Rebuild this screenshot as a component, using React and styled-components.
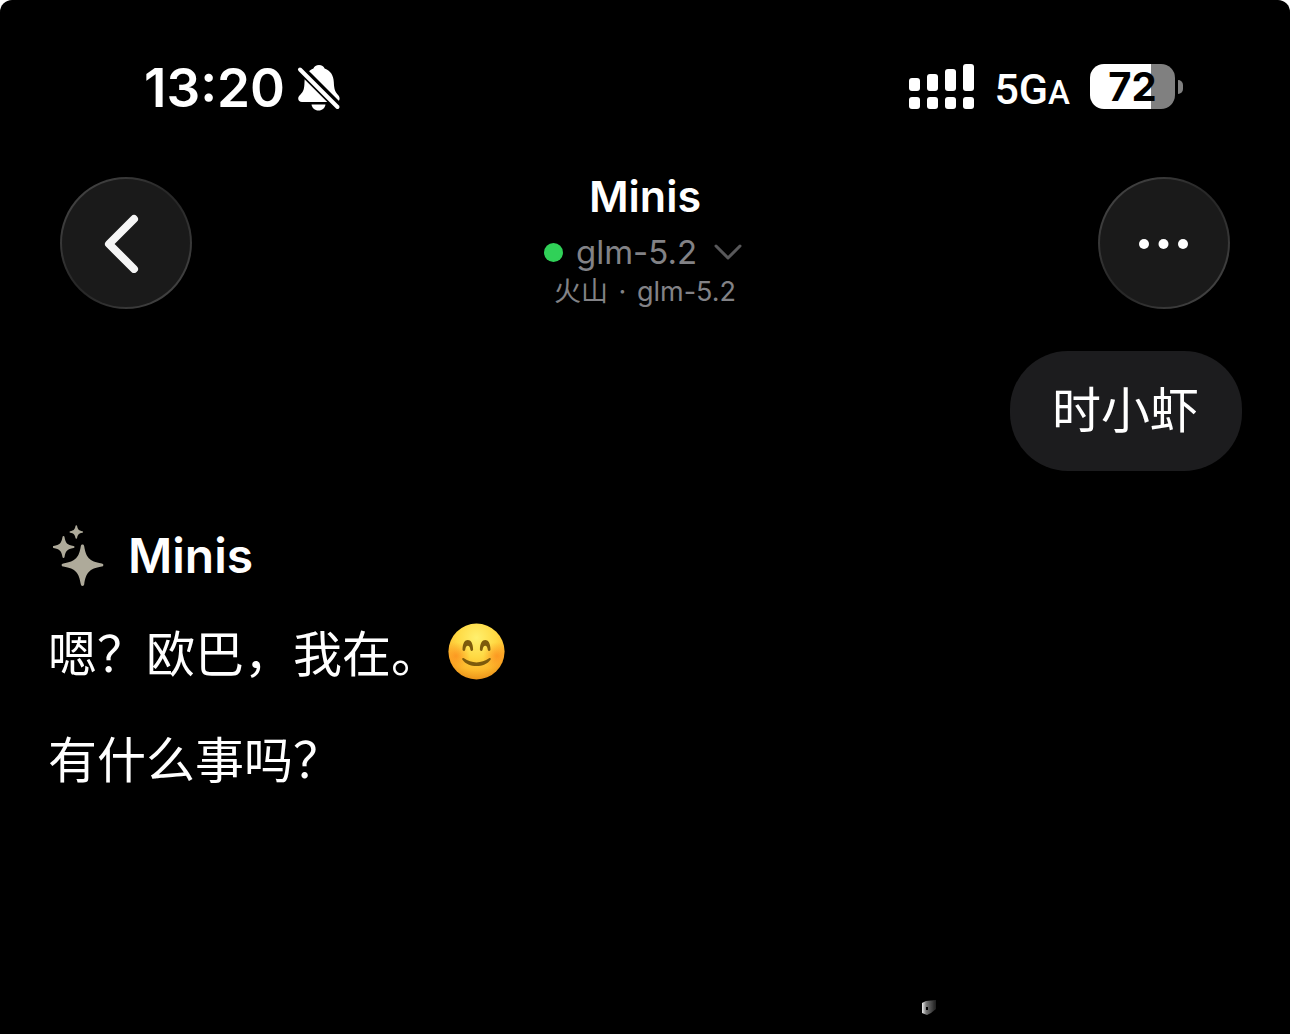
import React from "react";
import styled, { createGlobalStyle } from "styled-components";

const GlobalStyle = createGlobalStyle`
  * {
    box-sizing: border-box;
  }
  body {
    margin: 0;
    background: #fff;
    color: #fff;
    font-family: Inter, "Noto Sans CJK SC", sans-serif;
  }
  button {
    font: inherit;
    color: inherit;
    padding: 0;
    border: 0;
    background: none;
    cursor: pointer;
  }
  svg {
    display: block;
    flex: none;
  }
`;

const Screen = styled.div`
  min-height: 100vh;
  display: flex;
  flex-direction: column;
  background: #000;
  border-radius: 12px 12px 0 0;
`;

const StatusBar = styled.div`
  display: flex;
  justify-content: space-between;
  align-items: flex-start;
  padding: 58px 107px 0 144px;
`;

const Clock = styled.div`
  display: flex;
  align-items: center;
  gap: 12px;
  font-size: 53px;
  font-weight: 600;
  line-height: 60px;
`;

const StatusIcons = styled.div`
  display: flex;
  align-items: flex-end;
  margin-top: 6px;
`;

const Network = styled.span`
  margin: 0 20px;
  font-family: Roboto, sans-serif;
  font-size: 43px;
  font-weight: 500;
  line-height: 40px;

  small {
    font-size: 33px;
    line-height: 1;
  }
`;

const Battery = styled.div`
  width: 85px;
  height: 45px;
  border-radius: 14px;
  color: #000;
  font-size: 40px;
  font-weight: 700;
  line-height: 45px;
  text-align: center;
`;

const BatteryTip = styled.div`
  align-self: center;
  width: 5px;
  height: 14px;
  margin-left: 3px;
  border-radius: 0 7px 7px 0;
  background: #808080;
`;

const Header = styled.header`
  display: flex;
  justify-content: space-between;
  align-items: flex-start;
  padding: 0 60px;
  margin-top: 59px;
`;

const RoundButton = styled.button`
  width: 132px;
  height: 132px;
  display: flex;
  justify-content: center;
  align-items: center;
  border: 2px solid transparent;
  border-radius: 50%;
  background: linear-gradient(#1a1a1a, #1a1a1a) padding-box,
    linear-gradient(135deg, #4c4c4c, #282828 45%, #282828 55%, #4c4c4c)
      border-box;
`;

const TitleBox = styled.div`
  display: flex;
  flex-direction: column;
  align-items: center;
  color: #828286;
`;

const Title = styled.h1`
  margin: 0 0 17px;
  color: #fff;
  font-size: 43px;
  font-weight: 600;
  line-height: 38px;
`;

const ModelButton = styled.button`
  display: flex;
  align-items: center;
  font-size: 33px;
  line-height: 40px;

  span {
    margin: 0 17px 0 13px;
  }
`;

const OnlineDot = styled.i`
  width: 19px;
  height: 19px;
  border-radius: 50%;
  background: #30d158;
`;

const Provider = styled.div`
  font-size: 27px;
  line-height: 40px;

  span {
    margin: 0 3px;
  }
`;

const Chat = styled.main`
  display: flex;
  flex-direction: column;
  align-items: flex-start;
  padding: 39px 48px 0;
  font-size: 49px;
  line-height: 60px;
`;

const Bubble = styled.div`
  align-self: flex-end;
  padding: 30px 43px 30px 42px;
  border-radius: 58px;
  background: #1c1c1e;
`;

const Sender = styled.div`
  display: flex;
  align-items: center;
  gap: 23px;
  margin: 54px 0 34px 5px;

  h2 {
    margin: 0;
    font-size: 48px;
    font-weight: 600;
  }
`;

const Message = styled.p`
  display: flex;
  align-items: center;
  margin: 0 0 46px;
  font-family: "Noto Sans CJK SC", sans-serif;

  svg {
    margin-left: 8px;
  }
`;

const Footer = styled.footer`
  margin-top: auto;
  padding: 0 352px 18px 0;
  display: flex;
  justify-content: flex-end;
`;

const BATTERY = 72;
const LEVELS = [13, 17, 22, 27];

function BellOff() {
  return (
    <svg width="44" height="48" viewBox="0 0 44 48" fill="#fff">
      <path d="M22 1c2.800 0 4.800 1.500 5.600 3.500C34 6.800 36.500 12 36.800 18c.3 7 1.200 9.600 3.800 12.400 1.400 1.500 2 2.600 2 4.200 0 2-1.500 3.400-3.700 3.400H5C2.700 38 1.200 36.700 1.200 34.600c0-1.700.8-2.700 2.300-4.200C6.500 27.400 7.300 25 7.500 18 7.800 12 10.500 6.800 16.400 4.500 17.200 2.500 19.200 1 22 1z" />
      <path d="M14.500 40.500h14c-.5 3.400-3.200 6-7 6s-6.500-2.600-7-6z" />
      <path d="M-2-.6 48 49.400" stroke="#000" strokeWidth="9" />
      <path d="M3 5.500 40.500 43" stroke="#fff" strokeWidth="4" strokeLinecap="round" />
    </svg>
  );
}

function Signal() {
  return (
    <svg width="65" height="45" fill="#fff">
      {LEVELS.map((h, i) => (
        <g key={h}>
          <rect x={i * 18} y={27 - h} width="11" height={h} rx="3" />
          <rect x={i * 18} y="33" width="11" height="12" rx="3" />
        </g>
      ))}
    </svg>
  );
}

function Sparkles() {
  return (
    <svg width="52" height="62" viewBox="0 0 52 62" fill="#aeaa9a">
      <path d="M29.500 19.500c1 0 1.500.7 1.700 1.700 1.800 11 4.800 15 17.500 17.200 1 .2 1.700.7 1.700 1.600s-.7 1.400-1.700 1.600C36 43.800 33 48 31.200 59.300c-.2 1-.7 1.700-1.700 1.700s-1.500-.7-1.700-1.700C26 48 23 43.800 10.300 41.600c-1-.2-1.700-.7-1.700-1.600s.7-1.400 1.700-1.600C23 36.200 26 32.200 27.800 21.200c.2-1 .7-1.700 1.700-1.700z" />
      <path d="M10.500 11c.6 0 .9.400 1 1 1 6 2.700 8 9 9 .6.100 1 .4 1 1s-.4.900-1 1c-6.300 1-8 3-9 9-.1.600-.4 1-1 1s-.9-.4-1-1c-1-6-2.700-8-9-9-.6-.1-1-.4-1-1s.4-.9 1-1c6.300-1 8-3 9-9 .1-.6.4-1 1-1z" />
      <path d="M23.300.3c.5 0 .7.300.8.8.7 3.700 1.800 4.500 5.200 5.200.5.100.8.300.8.700s-.3.700-.8.800c-3.400.6-4.500 1.600-5.200 5.200-.1.500-.3.800-.8.800s-.7-.3-.8-.8c-.7-3.600-1.800-4.600-5.200-5.200-.5-.1-.8-.3-.8-.8s.3-.6.8-.7c3.400-.7 4.500-1.500 5.200-5.200.1-.5.300-.8.8-.8z" />
    </svg>
  );
}

function Smile() {
  return (
    <svg width="57" height="57" viewBox="0 0 57 57" role="img" aria-label="😊">
      <defs>
        <radialGradient id="face" cx="50%" cy="26%" r="76%">
          <stop offset="0" stopColor="#fff06e" />
          <stop offset=".45" stopColor="#ffd943" />
          <stop offset=".75" stopColor="#fdb92c" />
          <stop offset="1" stopColor="#e88d17" />
        </radialGradient>
        <radialGradient id="cheek">
          <stop offset="0" stopColor="#fb8a1c" stopOpacity=".75" />
          <stop offset="1" stopColor="#fb8a1c" stopOpacity="0" />
        </radialGradient>
        <clipPath id="head">
          <circle cx="28.500" cy="28.500" r="28" />
        </clipPath>
      </defs>
      <g clipPath="url(#head)">
        <path d="M0 0h57v57H0z" fill="url(#face)" />
        <circle cx="8" cy="33" r="14" fill="url(#cheek)" />
        <circle cx="49" cy="33" r="14" fill="url(#cheek)" />
      </g>
      <g fill="#7d5a0c">
        <path d="M14.500 26.500c.2-6.500 2.300-9.500 5.300-9.500s5.100 3 5.300 9.500c0 1.800-2.300 1.900-2.700.2-.4-2.500-1.200-4-2.600-4s-2.200 1.500-2.600 4c-.4 1.700-2.700 1.600-2.700-.2z" />
        <path d="M31.900 26.500c.2-6.500 2.300-9.500 5.300-9.500s5.100 3 5.300 9.500c0 1.800-2.300 1.900-2.700.2-.4-2.500-1.200-4-2.600-4s-2.200 1.500-2.600 4c-.4 1.700-2.700 1.600-2.700-.2z" />
        <path d="M14.300 36.500c-.6-1 .4-2 1.600-1.200 7.700 5.500 17.500 5.500 25.200 0 1.200-.8 2.200.2 1.600 1.200-5.900 8.800-22.500 8.800-28.400 0z" />
      </g>
    </svg>
  );
}

function Smudge() {
  return (
    <svg width="17" height="17" viewBox="0 0 17 17">
      <defs>
        <linearGradient id="smudge">
          <stop offset="0" stopColor="#eee" />
          <stop offset=".3" stopColor="#777" />
          <stop offset="1" stopColor="#1c1c1c" />
        </linearGradient>
        <filter id="soft">
          <feGaussianBlur stdDeviation=".7" />
        </filter>
      </defs>
      <g filter="url(#soft)">
        <path d="M1 4 5 2 15 1v9l-5 4-4 2-5-2z" fill="url(#smudge)" />
        <path d="M5 8h2v3H5z" fill="#000" />
      </g>
    </svg>
  );
}

function App() {
  return (
    <>
      <GlobalStyle />
      <Screen>
        <StatusBar>
          <Clock>
            <span>13:20</span>
            <BellOff />
          </Clock>
          <StatusIcons>
            <Signal />
            <Network>
              5G<small>A</small>
            </Network>
            <Battery
              style={{
                background: `linear-gradient(90deg, #fff ${BATTERY}%, #808080 ${BATTERY}%)`,
              }}
            >
              {BATTERY}
            </Battery>
            <BatteryTip />
          </StatusIcons>
        </StatusBar>

        <Header>
          <RoundButton aria-label="返回">
            <svg width="52" height="60" viewBox="0 0 52 60" fill="none">
              <path d="M34 6 9 31l25 25" stroke="#f5f5f5" strokeWidth="8" strokeLinecap="round" strokeLinejoin="round" />
            </svg>
          </RoundButton>
          <TitleBox>
            <Title>Minis</Title>
            <ModelButton>
              <OnlineDot />
              <span>glm-5.2</span>
              <svg width="32" height="18" viewBox="0 0 32 18" fill="none">
                <path d="m2 3 12 12L26 3" stroke="#58585a" strokeWidth="3" strokeLinecap="round" strokeLinejoin="round" />
              </svg>
            </ModelButton>
            <Provider>
              火山 <span>·</span> glm-5.2
            </Provider>
          </TitleBox>
          <RoundButton aria-label="更多">
            <svg width="50" height="14" fill="#fff">
              <circle cx="5" cy="8" r="5" />
              <circle cx="24.500" cy="8" r="5" />
              <circle cx="44" cy="8" r="5" />
            </svg>
          </RoundButton>
        </Header>

        <Chat>
          <Bubble>时小虾</Bubble>
          <Sender>
            <Sparkles />
            <h2>Minis</h2>
          </Sender>
          <Message>
            嗯？欧巴，我在。
            <Smile />
          </Message>
          <Message>有什么事吗？</Message>
        </Chat>

        <Footer>
          <Smudge />
        </Footer>
      </Screen>
    </>
  );
}

export default App;
